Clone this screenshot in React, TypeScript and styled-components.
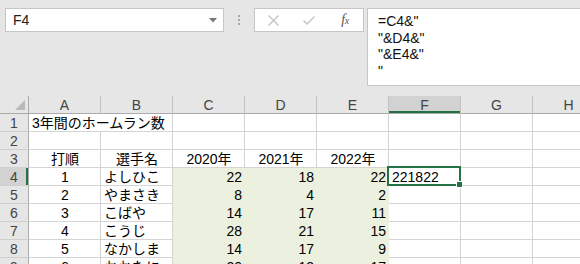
import React from 'react';
import styled, { createGlobalStyle, css } from 'styled-components';

const GlobalStyle = createGlobalStyle`
  html, body { margin: 0; padding: 0; background: #e6e6e6; overflow: hidden; }
  body { font-family: "Liberation Sans", "Noto Sans CJK JP", sans-serif; }
`;

const Page = styled.div`
  width: 580px;
  height: 264px;
  overflow: hidden;
  background: #e6e6e6;
`;

const Toolbar = styled.div`
  display: flex;
  align-items: flex-start;
  height: 96px;
  box-sizing: border-box;
  padding: 8px 0 0 5px;
`;

const NameBox = styled.div`
  width: 219px;
  height: 24px;
  box-sizing: border-box;
  border: 1px solid #c6c6c6;
  background: #fff;
  display: flex;
  align-items: center;
  padding: 0 6px 0 7px;
  font-size: 14px;
  color: #222;
`;

const NameText = styled.span`
  flex: 1;
`;

const Grip = styled.div`
  width: 30px;
  height: 24px;
  display: flex;
  flex-direction: column;
  align-items: center;
  justify-content: center;
  gap: 2px;
`;

const GripDot = styled.span`
  width: 2px;
  height: 2px;
  background: #a8a8a8;
`;

const ButtonBox = styled.div`
  width: 110px;
  height: 24px;
  box-sizing: border-box;
  border: 1px solid #c6c6c6;
  background: #fff;
  display: flex;
  align-items: center;
`;

const IconSlot = styled.span`
  width: 37px;
  height: 22px;
  display: flex;
  align-items: center;
  justify-content: center;
`;

const Fx = styled.span`
  font-family: "Liberation Serif", "DejaVu Serif", serif;
  font-style: italic;
  font-size: 14px;
  color: #555;
  letter-spacing: -0.5px;
  & small { font-size: 10px; }
`;

const FormulaInput = styled.div`
  flex: 1;
  margin-left: 3px;
  height: 78px;
  box-sizing: border-box;
  border: 1px solid #c6c6c6;
  border-right: none;
  background: #fff;
  padding: 4px 10px;
  font-size: 14px;
  line-height: 16.5px;
  color: #111;
  white-space: pre;
`;

const Grid = styled.div`
  display: grid;
  grid-template-columns: 29px repeat(8, 72px);
  grid-template-rows: 18px;
  grid-auto-rows: 18px;
  font-size: 14px;
`;

const Corner = styled.div`
  position: relative;
  background: #e6e6e6;
  border-right: 1px solid #ababab;
  border-bottom: 1px solid #ababab;
`;

const CornerMark = styled.svg`
  position: absolute;
  right: 3px;
  bottom: 3px;
`;

const ColHead = styled.div<{ $sel?: boolean }>`
  display: flex;
  align-items: center;
  justify-content: center;
  background: ${p => (p.$sel ? '#d2d2d2' : '#e6e6e6')};
  border-right: 1px solid #c3c3c3;
  border-bottom: 1px solid #ababab;
  color: #444;
  line-height: 16px;
  padding-top: 1px;
  ${p => p.$sel && css`box-shadow: inset 0 -2px 0 #217346;`}
`;

const RowHead = styled.div<{ $sel?: boolean }>`
  display: flex;
  align-items: flex-end;
  justify-content: center;
  background: ${p => (p.$sel ? '#d2d2d2' : '#e6e6e6')};
  border-right: 1px solid #ababab;
  border-bottom: 1px solid #d0d0d0;
  color: #444;
  line-height: 15px;
  ${p => p.$sel && css`box-shadow: inset -2px 0 0 #217346;`}
`;

type Align = 'left' | 'center' | 'right';

const Cell = styled.div<{ $align: Align; $fill?: boolean; $span?: number }>`
  position: relative;
  display: flex;
  align-items: flex-end;
  justify-content: ${p => (p.$align === 'left' ? 'flex-start' : p.$align === 'right' ? 'flex-end' : 'center')};
  padding: 0 2px 0 3px;
  background: ${p => (p.$fill ? '#ebf1de' : '#fff')};
  border-right: 1px solid ${p => (p.$fill ? '#ebf1de' : '#d4d4d4')};
  border-bottom: 1px solid ${p => (p.$fill ? '#ebf1de' : '#d4d4d4')};
  color: #000;
  line-height: 15px;
  white-space: nowrap;
  ${p => p.$span && css`grid-column: span ${p.$span};`}
`;

const Selection = styled.div`
  position: absolute;
  left: -2px;
  top: -2px;
  right: -1px;
  bottom: -1px;
  border: 2px solid #217346;
  pointer-events: none;
  z-index: 2;
`;

const FillHandle = styled.div`
  position: absolute;
  right: -4px;
  bottom: -4px;
  width: 5px;
  height: 5px;
  background: #217346;
  border: 1px solid #fff;
`;

const COLS = ['A', 'B', 'C', 'D', 'E', 'F', 'G', 'H'];

type CellDef = { v: string; a: Align; fill?: boolean; span?: number; sel?: boolean };

const players: [string, string, string, string, string][] = [
  ['1', 'よしひこ', '22', '18', '22'],
  ['2', 'やまさき', '8', '4', '2'],
  ['3', 'こばや', '14', '17', '11'],
  ['4', 'こうじ', '28', '21', '15'],
  ['5', 'なかしま', '14', '17', '9'],
  ['6', 'おおたに', '20', '13', '17'],
];

const empty = (n: number): CellDef[] => Array.from({ length: n }, () => ({ v: '', a: 'left' as Align }));

const rows: CellDef[][] = [
  [{ v: '3年間のホームラン数', a: 'left', span: 2 }, ...empty(6)],
  empty(8),
  [
    { v: '打順', a: 'center' },
    { v: '選手名', a: 'center' },
    { v: '2020年', a: 'center' },
    { v: '2021年', a: 'center' },
    { v: '2022年', a: 'center' },
    ...empty(3),
  ],
  ...players.map((p, i) => [
    { v: p[0], a: 'center' as Align },
    { v: p[1], a: 'left' as Align },
    { v: p[2], a: 'right' as Align, fill: true },
    { v: p[3], a: 'right' as Align, fill: true },
    { v: p[4], a: 'right' as Align, fill: true },
    i === 0 ? { v: '221822', a: 'left' as Align, sel: true } : { v: '', a: 'left' as Align },
    ...empty(2),
  ]),
];

export default function App() {
  return (
    <Page>
      <GlobalStyle />
      <Toolbar>
        <NameBox>
          <NameText>F4</NameText>
          <svg width="8" height="5" viewBox="0 0 8 5">
            <path d="M0 0 L8 0 L4 4.5 Z" fill="#777" />
          </svg>
        </NameBox>
        <Grip>
          <GripDot />
          <GripDot />
          <GripDot />
        </Grip>
        <ButtonBox>
          <IconSlot>
            <svg width="11" height="11" viewBox="0 0 11 11">
              <path d="M0.5 0.5 L10.5 10.5 M10.5 0.5 L0.5 10.5" stroke="#c2c2c2" strokeWidth="1.3" fill="none" />
            </svg>
          </IconSlot>
          <IconSlot>
            <svg width="12" height="9" viewBox="0 0 12 9">
              <path d="M0.5 4.5 L4 8 L11.5 0.5" stroke="#c2c2c2" strokeWidth="1.4" fill="none" />
            </svg>
          </IconSlot>
          <IconSlot>
            <Fx>
              f<small>x</small>
            </Fx>
          </IconSlot>
        </ButtonBox>
        <FormulaInput>{'=C4&"\n"&D4&"\n"&E4&"\n"'}</FormulaInput>
      </Toolbar>
      <Grid>
        <Corner>
          <CornerMark width="10" height="10" viewBox="0 0 10 10">
            <path d="M10 0 L10 10 L0 10 Z" fill="#b9b9b9" />
          </CornerMark>
        </Corner>
        {COLS.map(c => (
          <ColHead key={c} $sel={c === 'F'}>
            {c}
          </ColHead>
        ))}
        {rows.map((r, ri) => (
          <React.Fragment key={ri}>
            <RowHead $sel={ri === 3}>{ri + 1}</RowHead>
            {r.map((cell, ci) => (
              <Cell key={ci} $align={cell.a} $fill={cell.fill} $span={cell.span}>
                {cell.v}
                {cell.sel && (
                  <Selection>
                    <FillHandle />
                  </Selection>
                )}
              </Cell>
            ))}
          </React.Fragment>
        ))}
      </Grid>
    </Page>
  );
}
